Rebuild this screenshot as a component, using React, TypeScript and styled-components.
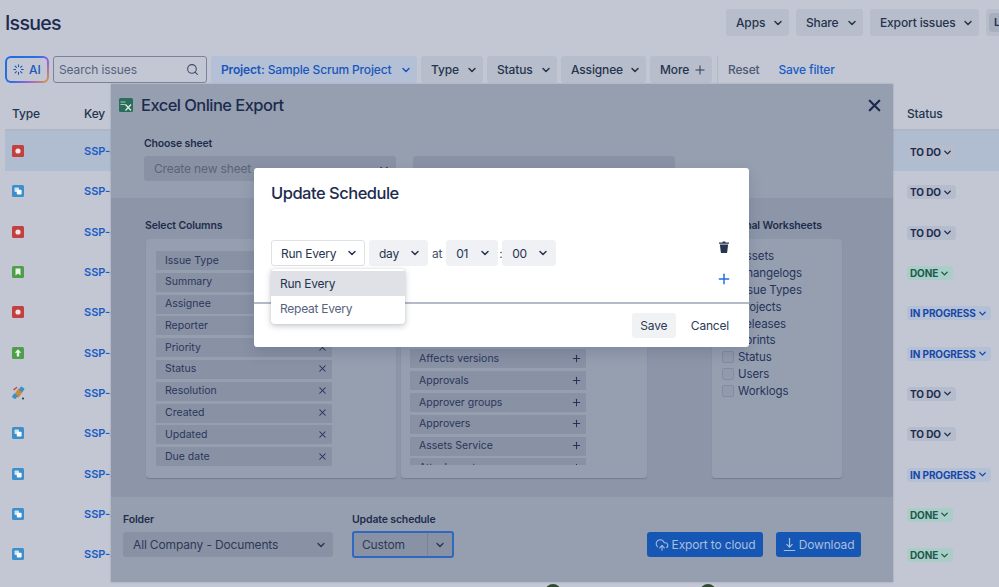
import React from "react";
import styled, { createGlobalStyle } from "styled-components";
import { ChevronDown, Search, X, Plus, CloudUpload } from "lucide-react";

const Global = createGlobalStyle`
  html, body { margin: 0; padding: 0; background: #c2c7d3; }
  body { font-family: Inter, "Noto Sans", "Liberation Sans", sans-serif; color: #1c2b4e; -webkit-font-smoothing: antialiased; }
  * { box-sizing: border-box; }
`;

const Page = styled.div`
  position: relative;
  width: 999px;
  height: 587px;
  overflow: hidden;
  background: #c2c7d3;
`;
const TopBar = styled.div`
  display: flex;
  align-items: center;
  height: 27px;
  margin-top: 9px;
  padding-left: 5px;
  width: 1040px;
`;
const Title = styled.h1`
  flex: 0 0 721px;
  margin: 0;
  font-size: 19.5px;
  font-weight: 500;
  letter-spacing: -0.7px;
  color: #1c2b4e;
`;
const Actions = styled.div`
  display: flex;
  gap: 7px;
`;
const Btn = styled.div<{ $w: number; $tone?: "plain" | "blue" }>`
  display: flex;
  align-items: center;
  justify-content: space-between;
  flex: 0 0 ${(p) => p.$w}px;
  height: 27px;
  padding: 0 5px 0 10px;
  border-radius: 3px;
  font-size: 12px;
  font-weight: 500;
  letter-spacing: -0.15px;
  white-space: nowrap;
  background: ${(p) => (p.$tone === "blue" ? "#b3c0d6" : "#b7bdca")};
  color: ${(p) => (p.$tone === "blue" ? "#1a56ba" : "#25344f")};
  b { font-weight: 600; }
`;
const Inner = styled.span`
  display: block;
  margin-left: -7px;
  width: 20px;
  height: 19px;
  border-radius: 3px;
  background: #a7aebd;
  font-size: 11px;
  font-weight: 600;
  line-height: 19px;
  padding-left: 5px;
`;
const FilterRow = styled.div`
  display: flex;
  align-items: center;
  gap: 4px;
  height: 27px;
  margin-top: 20px;
  padding-left: 5px;
`;
const AiBtn = styled.div`
  display: flex;
  align-items: center;
  justify-content: center;
  gap: 5px;
  flex: 0 0 44px;
  height: 27px;
  border: 2px solid transparent;
  border-radius: 6px;
  background: linear-gradient(#c2c7d3, #c2c7d3) padding-box,
    linear-gradient(135deg, #1f6be0 0%, #2d6fe0 45%, #9a62d8 70%, #e09a3a 100%) border-box;
  color: #1a56ba;
  font-size: 12px;
  font-weight: 500;
`;
const SearchBox = styled.div`
  display: flex;
  align-items: center;
  justify-content: space-between;
  flex: 0 0 154px;
  height: 27px;
  padding: 0 7px 0 5px;
  border: 1px solid #7a8499;
  border-radius: 3px;
  color: #57637c;
  font-size: 12px;
  letter-spacing: -0.1px;
`;
const Divider = styled.span`
  width: 1px;
  height: 27px;
  margin-left: 1px;
  background: #b3b9c7;
`;
const LinkText = styled.span<{ $blue?: boolean }>`
  margin-left: ${(p) => (p.$blue ? "15px" : "6px")};
  font-size: 12px;
  font-weight: 500;
  letter-spacing: -0.15px;
  color: ${(p) => (p.$blue ? "#1a5cc4" : "#4d5a73")};
`;
const TableHead = styled.div`
  display: grid;
  grid-template-columns: 79px 1fr 92px;
  align-items: center;
  height: 48px;
  padding-top: 14px;
  margin-left: 5px;
  border-bottom: 2px solid #b0b6c4;
  font-size: 12px;
  font-weight: 500;
  letter-spacing: -0.15px;
  color: #25344f;
`;
const HeadCell = styled.span<{ $pad?: boolean }>`
  padding-left: ${(p) => (p.$pad ? "7px" : "0")};
`;
const Row = styled.div<{ $active?: boolean }>`
  display: grid;
  grid-template-columns: 79px 1fr 92px;
  align-items: center;
  height: 40.3px;
  margin-left: 5px;
  background: ${(p) => (p.$active ? "#b0bcd0" : "transparent")};
`;
const TypeCell = styled.div`
  display: flex;
  padding-left: 7px;
`;
const KeyCell = styled.span`
  font-size: 11px;
  font-weight: 600;
  color: #1a5cc4;
`;
const Tag = styled.span<{ $kind: string }>`
  display: inline-flex;
  align-items: center;
  justify-self: start;
  gap: 1px;
  height: 14px;
  margin-top: 2px;
  padding: 0 3px;
  border-radius: 3px;
  font-size: 10px;
  font-weight: 700;
  letter-spacing: -0.1px;
  white-space: nowrap;
  background: ${(p) => (p.$kind === "DONE" ? "#aacdc8" : p.$kind === "TO DO" ? "#b5bccb" : "#b3c0d6")};
  color: ${(p) => (p.$kind === "DONE" ? "#1c5a4a" : p.$kind === "TO DO" ? "#1c2b4e" : "#1747a6")};
`;
const Footer = styled.div`
  display: flex;
  gap: 139px;
  padding: 10px 0 0 545px;
`;
const Avatar = styled.span`
  width: 16px;
  height: 16px;
  border-radius: 50%;
  background: #2f4a33;
`;

/* export modal */
const Modal = styled.section`
  position: absolute;
  left: 111px;
  top: 84px;
  width: 782px;
  height: 498px;
  display: flex;
  flex-direction: column;
  background: #969fb0;
  box-shadow: 0 0 2px rgba(60, 70, 90, 0.3);
`;
const ModalHead = styled.header`
  display: flex;
  align-items: center;
  gap: 8px;
  height: 42px;
  padding: 0 9px 0 8px;
`;
const ModalTitle = styled.h2`
  flex: 1;
  margin: 0;
  font-size: 16.5px;
  font-weight: 500;
  letter-spacing: -0.55px;
  color: #1c2b4e;
`;
const SheetRow = styled.div`
  display: flex;
  align-items: flex-end;
  gap: 17px;
  height: 72px;
  padding: 0 0 17px 33px;
`;
const Field = styled.div`
  display: flex;
  flex-direction: column;
  gap: 6px;
`;
const Label = styled.label`
  display: block;
  font-size: 10.5px;
  font-weight: 600;
  line-height: 13px;
  letter-spacing: -0.15px;
  color: #1f2d4c;
  white-space: nowrap;
`;
const Select = styled.div<{ $w: number; $muted?: boolean }>`
  display: flex;
  align-items: center;
  justify-content: space-between;
  width: ${(p) => p.$w}px;
  height: 25px;
  padding: 0 6px 0 10px;
  border-radius: 3px;
  background: #8991a5;
  font-size: 12px;
  letter-spacing: -0.15px;
  color: ${(p) => (p.$muted ? "#5a6579" : "#2c3a57")};
`;
const Band = styled.div`
  display: flex;
  height: 299px;
  padding: 21px 0 19px 34px;
  background: #8d96a9;
`;
const Column = styled.div<{ $w: number; $ml?: number }>`
  display: flex;
  flex-direction: column;
  width: ${(p) => p.$w}px;
  margin-left: ${(p) => p.$ml ?? 0}px;
`;
const Panel = styled.div<{ $indent?: number }>`
  flex: 1;
  margin-top: 7px;
  margin-left: ${(p) => p.$indent ?? 1}px;
  border-radius: 3px;
  background: #969fb0;
  box-shadow: 0 1px 1px rgba(60, 70, 90, 0.3);
`;
const ItemList = styled.div<{ $top: number; $left: number; $h: number }>`
  display: flex;
  flex-direction: column;
  gap: 2.8px;
  height: ${(p) => p.$h}px;
  margin: ${(p) => p.$top}px 0 0 ${(p) => p.$left}px;
  width: 176px;
  overflow: hidden;
`;
const Item = styled.div`
  display: flex;
  flex: 0 0 19px;
  align-items: center;
  justify-content: space-between;
  padding: 0 4px 1px 9px;
  background: #8991a5;
  font-size: 10.5px;
  color: #29375a;
`;
const CheckList = styled.div`
  display: flex;
  flex-direction: column;
  padding: 9px 0 0 10px;
`;
const CheckRow = styled.div`
  display: flex;
  align-items: center;
  gap: 4px;
  height: 16.8px;
  font-size: 11.5px;
  letter-spacing: -0.1px;
  color: #25335a;
`;
const Box = styled.span`
  width: 12px;
  height: 12px;
  border: 1px solid #838ca0;
  border-radius: 2px;
  background: #929bad;
`;
const ModalFoot = styled.footer`
  flex: 1;
  display: flex;
  align-items: flex-end;
  padding: 0 31px 25px 12px;
`;
const CustomSelect = styled.div`
  display: flex;
  align-items: center;
  width: 102px;
  height: 27px;
  margin-top: 5px;
  margin-bottom: -1px;
  border: 2px solid #2e68c0;
  border-radius: 3px;
  background: #8991a5;
  font-size: 12px;
  letter-spacing: -0.15px;
  color: #2c3a57;
`;
const CustomText = styled.span`
  flex: 1;
  padding-left: 8px;
`;
const Caret = styled.span`
  display: flex;
  justify-content: center;
  align-items: center;
  width: 25px;
  height: 100%;
  border-left: 1px solid #7a8499;
`;
const PrimaryBtn = styled.div<{ $w: number; $ml: number }>`
  display: flex;
  align-items: center;
  justify-content: center;
  gap: 3px;
  width: ${(p) => p.$w}px;
  height: 25px;
  margin-left: ${(p) => p.$ml}px;
  border-radius: 3px;
  background: #1656b4;
  color: #a9bedd;
  font-size: 12px;
  letter-spacing: -0.15px;
  white-space: nowrap;
`;

/* schedule dialog */
const Dialog = styled.section`
  position: absolute;
  left: 254px;
  top: 168px;
  width: 495px;
  height: 179px;
  display: flex;
  flex-direction: column;
  border-radius: 3px;
  background: #fff;
  box-shadow: 0 6px 14px rgba(40, 50, 75, 0.18);
`;
const DialogTitle = styled.h3`
  margin: 0;
  padding: 14px 17px 0;
  height: 72px;
  font-size: 16.5px;
  line-height: 22px;
  font-weight: 500;
  letter-spacing: -0.5px;
  color: #1c2b4e;
`;
const ScheduleBody = styled.div`
  position: relative;
  display: flex;
  justify-content: space-between;
  height: 64px;
  padding: 0 17px;
  border-bottom: 2px solid #b5bac8;
`;
const ScheduleRow = styled.div`
  display: flex;
  align-items: center;
  height: 26px;
  gap: 4px;
  font-size: 12px;
  letter-spacing: -0.2px;
  color: #42526e;
`;
const Colon = styled.span`
  width: 0;
  margin: 0 -1px 0 -3px;
`;
const Drop = styled.div<{ $w: number; $open?: boolean }>`
  display: flex;
  align-items: center;
  justify-content: space-between;
  width: ${(p) => p.$w}px;
  height: 26px;
  padding: 0 6px 0 9px;
  border-radius: 3px;
  border: 1px solid ${(p) => (p.$open ? "#dfe1e6" : "#f0f1f4")};
  background: ${(p) => (p.$open ? "#fff" : "#f0f1f4")};
  font-size: 12px;
  letter-spacing: -0.25px;
  color: #25344f;
`;
const SideIcons = styled.div`
  display: flex;
  flex-direction: column;
  align-items: center;
  gap: 18px;
  margin-top: 1px;
`;
const Menu = styled.div`
  position: absolute;
  left: 17px;
  top: 29px;
  width: 134px;
  padding: 2px 0 3px;
  border-radius: 3px;
  background: #fff;
  box-shadow: 0 2px 6px rgba(40, 50, 75, 0.28), 0 0 1px rgba(40, 50, 75, 0.3);
`;
const MenuItem = styled.div<{ $on?: boolean }>`
  display: flex;
  align-items: center;
  height: 25px;
  padding-left: 9px;
  font-size: 12px;
  letter-spacing: -0.25px;
  background: ${(p) => (p.$on ? "#dfe1e6" : "#fff")};
  color: ${(p) => (p.$on ? "#25344f" : "#57637c")};
`;
const DialogFoot = styled.div`
  display: flex;
  align-items: center;
  justify-content: flex-end;
  flex: 1;
  padding: 0 20px 0 0;
  gap: 15px;
  font-size: 12px;
  letter-spacing: -0.2px;
  color: #2c3a57;
`;
const SaveBtn = styled.div`
  display: flex;
  align-items: center;
  justify-content: center;
  width: 44px;
  height: 25px;
  border-radius: 3px;
  background: #f1f2f4;
`;

const IconFrame = ({ bg, children }: { bg: string; children: React.ReactNode }) => (
  <svg width="12" height="12" viewBox="0 0 12 12">
    <rect width="12" height="12" rx="1.5" fill={bg} />
    {children}
  </svg>
);
const TypeIcon = ({ t }: { t: string }) => {
  if (t === "bug") return <IconFrame bg="#c2403f"><circle cx="6" cy="6" r="2.6" fill="#f3e6e6" /></IconFrame>;
  if (t === "task")
    return (
      <IconFrame bg="#3d8fcb">
        <rect x="2.5" y="2.5" width="4.5" height="4.5" rx="0.8" fill="#cfe4f3" />
        <rect x="4.8" y="4.8" width="4.8" height="4.8" rx="0.8" fill="#fff" />
      </IconFrame>
    );
  if (t === "story") return <IconFrame bg="#4f9f4a"><path d="M3.5 2.5h5v7L6 7.6 3.5 9.5z" fill="#eaf4e9" /></IconFrame>;
  if (t === "up") return <IconFrame bg="#4f9f4a"><path d="M6 2.3 9.3 5.8H7.2v3.6H4.8V5.8H2.7z" fill="#eaf4e9" /></IconFrame>;
  return (
    <svg width="13" height="14" viewBox="0 0 13 14">
      <rect x="3.8" y="3" width="5.5" height="8" rx="1" transform="rotate(35 6.5 7)" fill="#c98a35" />
      <rect x="7.5" y="1" width="4.5" height="4.5" rx="1" transform="rotate(35 9.7 3.2)" fill="#3d8fcb" />
      <rect x="0.6" y="8" width="4.5" height="4.5" rx="1" transform="rotate(35 2.8 10.2)" fill="#3d8fcb" />
      <path d="M1.5 4 5 1.2" stroke="#c2403f" strokeWidth="1.4" />
      <circle cx="11" cy="12.6" r="1" fill="#1c2b4e" />
    </svg>
  );
};
const Chev = ({ c = "#25344f", s = 12 }: { c?: string; s?: number }) => (
  <ChevronDown size={s} color={c} strokeWidth={3} />
);
const Spark = () => (
  <svg width="11" height="11" viewBox="0 0 11 11" stroke="#1a56ba" strokeWidth="1.1" strokeLinecap="round">
    <path d="M5.5.7v1.9M5.5 8.4v1.9M.7 5.5h1.9M8.4 5.5h1.9M2.1 2.1l1.3 1.3M7.6 7.6l1.3 1.3M8.9 2.1 7.6 3.4M3.4 7.6 2.1 8.9" />
  </svg>
);
const ExcelIcon = () => (
  <svg width="14" height="14" viewBox="0 0 14 14">
    <rect width="14" height="14" rx="1.5" fill="#2b6d5b" />
    <path d="M1.5 4h5M1.5 6.5h5" stroke="#a9c8bd" strokeWidth="1" />
    <path d="M6.5 6.5 12 12.5M12 6.5l-5.5 6" stroke="#dcebe5" strokeWidth="1.3" />
  </svg>
);
const Trash = () => (
  <svg width="12" height="12" viewBox="0 0 12 12" fill="#25344f">
    <path d="M1 1.6h3.4L4.8.6h2.4l.4 1H11v1.2H1z" />
    <path d="M1.9 3.6h8.2l-.9 7.6c0 .4-.3.7-.7.7H3.5c-.4 0-.7-.3-.7-.7z" />
  </svg>
);
const DownloadGlyph = () => (
  <svg width="13" height="15" viewBox="0 0 13 15" fill="none" stroke="#a9bedd" strokeWidth="1.2">
    <path d="M6.5 1v9M3.5 7.2l3 3 3-3M.8 13.5h11.4" />
  </svg>
);

const rows: [string, string, string][] = [
  ["bug", "SSP-47", "TO DO"],
  ["task", "SSP-46", "TO DO"],
  ["bug", "SSP-45", "TO DO"],
  ["story", "SSP-44", "DONE"],
  ["bug", "SSP-43", "IN PROGRESS"],
  ["up", "SSP-42", "IN PROGRESS"],
  ["multi", "SSP-41", "TO DO"],
  ["task", "SSP-39", "TO DO"],
  ["task", "SSP-38", "IN PROGRESS"],
  ["task", "SSP-37", "DONE"],
  ["task", "SSP-36", "DONE"],
];
const chosen = ["Issue Type", "Summary", "Assignee", "Reporter", "Priority", "Status", "Resolution", "Created", "Updated", "Due date"];
const available = ["Actual end", "Actual start", "Affected hardware", "Affected services", "Affects hardware", "Affects versions", "Approvals", "Approver groups", "Approvers", "Assets Service", "Attachment"];
const sheets = ["Assets", "Changelogs", "Issue Types", "Projects", "Releases", "Sprints", "Status", "Users", "Worklogs"];
const tagColor = (k: string) => (k === "DONE" ? "#1c5a4a" : k === "TO DO" ? "#1c2b4e" : "#1747a6");

export default function App() {
  return (
    <Page>
      <Global />
      <TopBar>
        <Title>Issues</Title>
        <Actions>
          <Btn $w={63}>Apps <Chev /></Btn>
          <Btn $w={67}>Share <Chev /></Btn>
          <Btn $w={109}>Export issues <Chev /></Btn>
          <Btn $w={32}><Inner>L</Inner></Btn>
        </Actions>
      </TopBar>
      <FilterRow>
        <AiBtn><Spark />AI</AiBtn>
        <SearchBox>Search issues<Search size={13} color="#3f4c66" strokeWidth={2} /></SearchBox>
        <Btn $w={206} $tone="blue"><span><b>Project:</b> Sample Scrum Project</span><Chev c="#1a56ba" /></Btn>
        <Btn $w={62}>Type <Chev /></Btn>
        <Btn $w={70}>Status <Chev /></Btn>
        <Btn $w={85}>Assignee <Chev /></Btn>
        <Btn $w={62}>More <Plus size={14} strokeWidth={1.6} /></Btn>
        <Divider />
        <LinkText>Reset</LinkText>
        <LinkText $blue>Save filter</LinkText>
      </FilterRow>
      <TableHead>
        <HeadCell $pad>Type</HeadCell>
        <HeadCell>Key</HeadCell>
        <HeadCell>Status</HeadCell>
      </TableHead>
      {rows.map(([t, k, s], i) => (
        <Row key={k} $active={i === 0}>
          <TypeCell><TypeIcon t={t} /></TypeCell>
          <KeyCell>{k}</KeyCell>
          <Tag $kind={s}>{s}<Chev c={tagColor(s)} s={11} /></Tag>
        </Row>
      ))}
      <Footer><Avatar /><Avatar /></Footer>

      <Modal>
        <ModalHead>
          <ExcelIcon />
          <ModalTitle>Excel Online Export</ModalTitle>
          <X size={19} color="#1c2b4e" strokeWidth={2.8} />
        </ModalHead>
        <SheetRow>
          <Field>
            <Label>Choose sheet</Label>
            <Select $w={252} $muted>Create new sheet<Chev c="#2c3a57" /></Select>
          </Field>
          <Select $w={262} />
        </SheetRow>
        <Band>
          <Column $w={251}>
            <Label>Select Columns</Label>
            <Panel>
              <ItemList $top={12} $left={10} $h={217}>
                {chosen.map((c) => (
                  <Item key={c}>{c}<X size={11} strokeWidth={2.2} color="#25335a" /></Item>
                ))}
              </ItemList>
            </Panel>
          </Column>
          <Column $w={247} $ml={4}>
            <Label>Available Columns</Label>
            <Panel>
              <ItemList $top={1.5} $left={9} $h={224}>
                {available.map((c) => (
                  <Item key={c}>{c}<Plus size={11} strokeWidth={2.2} color="#25335a" /></Item>
                ))}
              </ItemList>
            </Panel>
          </Column>
          <Column $w={132} $ml={63}>
            <Label>Additional Worksheets</Label>
            <Panel $indent={2}>
              <CheckList>
                {sheets.map((s) => (
                  <CheckRow key={s}><Box />{s}</CheckRow>
                ))}
              </CheckList>
            </Panel>
          </Column>
        </Band>
        <ModalFoot>
          <Field>
            <Label>Folder</Label>
            <Select $w={210}>All Company - Documents<Chev c="#2c3a57" /></Select>
          </Field>
          <Column $w={102} $ml={19}>
            <Label>Update schedule</Label>
            <CustomSelect><CustomText>Custom</CustomText><Caret><Chev c="#2c3a57" /></Caret></CustomSelect>
          </Column>
          <PrimaryBtn $w={116} $ml={193}><CloudUpload size={14} strokeWidth={1.8} />Export to cloud</PrimaryBtn>
          <PrimaryBtn $w={85} $ml={13}><DownloadGlyph />Download</PrimaryBtn>
        </ModalFoot>
      </Modal>

      <Dialog>
        <DialogTitle>Update Schedule</DialogTitle>
        <ScheduleBody>
          <ScheduleRow>
            <Drop $w={94} $open>Run Every <Chev /></Drop>
            <Drop $w={59}>day <Chev /></Drop>
            <span>at</span>
            <Drop $w={52}>01 <Chev /></Drop>
            <Colon>:</Colon>
            <Drop $w={54}>00 <Chev /></Drop>
          </ScheduleRow>
          <SideIcons>
            <Trash />
            <Plus size={16} color="#1f6fe0" strokeWidth={2.2} />
          </SideIcons>
          <Menu>
            <MenuItem $on>Run Every</MenuItem>
            <MenuItem>Repeat Every</MenuItem>
          </Menu>
        </ScheduleBody>
        <DialogFoot>
          <SaveBtn>Save</SaveBtn>
          <span>Cancel</span>
        </DialogFoot>
      </Dialog>
    </Page>
  );
}
